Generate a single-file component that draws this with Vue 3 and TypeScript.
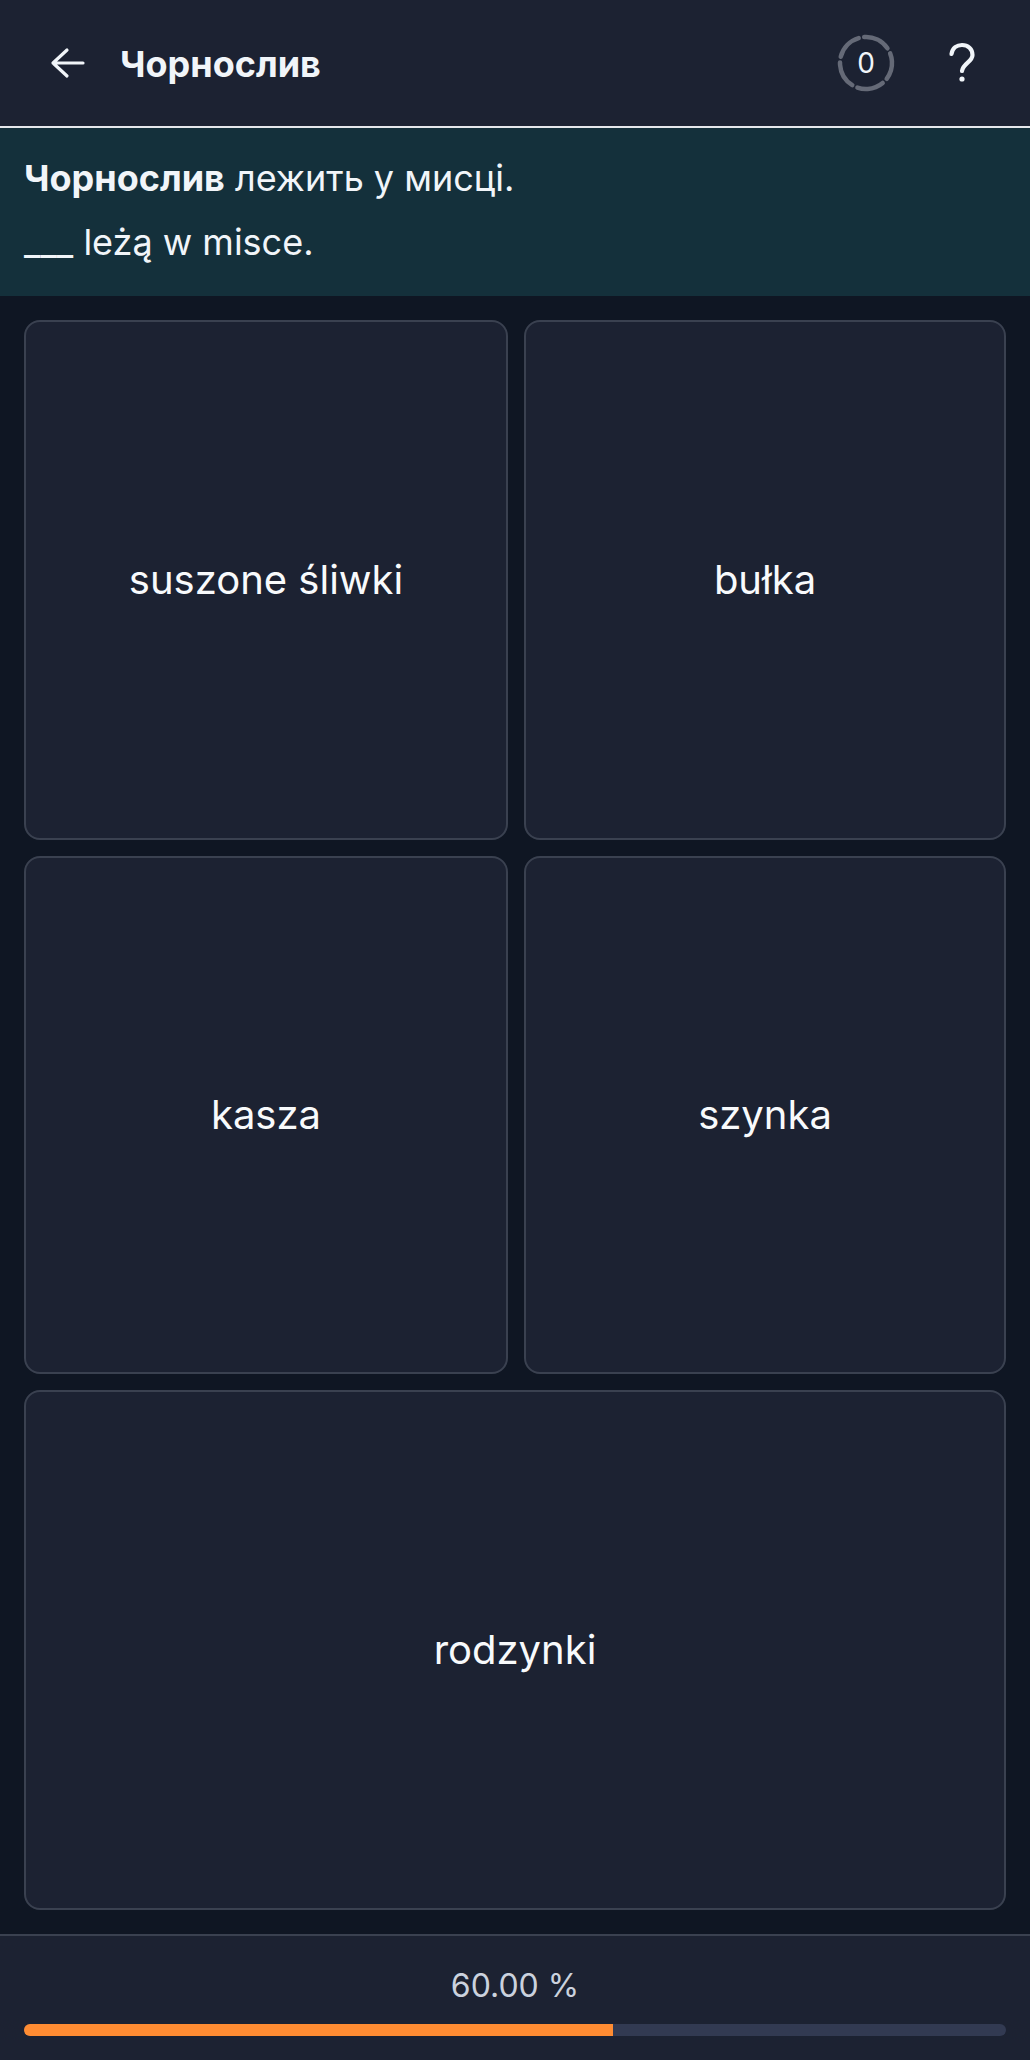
<script setup lang="ts">
interface Option { label: string; wide?: boolean }
const options: Option[] = [
  { label: 'suszone śliwki' },
  { label: 'bułka' },
  { label: 'kasza' },
  { label: 'szynka' },
  { label: 'rodzynki', wide: true },
]
const progress = 60
</script>

<template>
  <div class="page">
    <header class="topbar">
      <svg class="back" width="36" height="32" viewBox="0 0 36 32" fill="none" stroke="#f1f5f9" stroke-width="3.2" stroke-linecap="round" stroke-linejoin="round">
        <path d="M33 16H3M17 3 3 16l14 13" />
      </svg>
      <h1 class="title">Чорнослив</h1>
      <div class="ring">
        <svg width="60" height="60" viewBox="0 0 60 60" fill="none">
          <circle cx="30" cy="30" r="26" stroke="#656a77" stroke-width="4.5" stroke-linecap="round" pathLength="100" stroke-dasharray="16.5 3.5" transform="rotate(-94 30 30)" />
        </svg>
        <span class="count">0</span>
      </div>
      <svg class="help" width="60" height="60" viewBox="0 0 60 60" fill="none" stroke="#f1f5f9" stroke-width="4.2" stroke-linecap="round">
        <path d="M19.5 21C20.5 15 25 12 30 12C36 12 40.5 16 40.5 22C40.5 29 31 30 30 38" />
        <circle cx="30" cy="46" r="2.6" fill="#f1f5f9" stroke="none" />
      </svg>
    </header>
    <section class="prompt">
      <p class="line"><b>Чорнослив</b> лежить у мисці.</p>
      <p class="line">___ leżą w misce.</p>
    </section>
    <main class="grid">
      <button v-for="o in options" :key="o.label" class="card" :class="{ wide: o.wide }"><span class="label">{{ o.label }}</span></button>
    </main>
    <footer class="footer">
      <div class="pct">60.00 %</div>
      <div class="track"><div class="fill" :style="{ width: progress + '%' }"></div></div>
    </footer>
  </div>
</template>

<style>
html, body { margin: 0; background: #0f1623; }
</style>

<style scoped>
.page {
  width: 1030px;
  height: 2060px;
  display: flex;
  flex-direction: column;
  background: #0f1623;
  font-family: Inter, "Noto Sans", sans-serif;
  color: #f1f5f9;
}
.topbar {
  box-sizing: border-box;
  height: 128px;
  flex: none;
  display: flex;
  align-items: center;
  padding: 0 38px 0 50px;
  background: #1c2232;
  border-bottom: 2px solid #e5e7eb;
}
.back { flex: none; }
.title {
  margin: 2px 0 0 34px;
  font-size: 36px;
  font-weight: 700;
  flex: 1;
}
.ring {
  position: relative;
  width: 60px;
  height: 60px;
  display: flex;
  align-items: center;
  justify-content: center;
}
.ring svg { position: absolute; inset: 0; }
.count { font-size: 28px; }
.help { margin-left: 36px; flex: none; }
.prompt {
  box-sizing: border-box;
  height: 168px;
  flex: none;
  padding: 18px 24px 0;
  background: #14303b;
}
.line {
  margin: 0;
  font-size: 36px;
  line-height: 64px;
}
.grid {
  flex: 1;
  display: grid;
  grid-template-columns: 484px 482px;
  grid-template-rows: 520px 518px 520px;
  gap: 16px;
  padding: 24px;
  min-height: 0;
}
.card {
  font: inherit;
  font-size: 40px;
  color: #f8fafc;
  background: #1c2232;
  border: 2px solid #3a4150;
  border-radius: 16px;
  padding: 0;
  display: flex;
  align-items: center;
  justify-content: center;
}
.label { display: block; margin-top: -2px; }
.wide { grid-column: span 2; }
.footer {
  box-sizing: border-box;
  height: 126px;
  flex: none;
  background: #1c2232;
  border-top: 2px solid #3a4150;
  padding: 0 24px;
  display: flex;
  flex-direction: column;
  align-items: stretch;
}
.pct {
  margin-top: 28px;
  text-align: center;
  font-size: 32px;
  line-height: 44px;
  color: #cbd2de;
}
.track {
  margin-top: 16px;
  height: 12px;
  border-radius: 6px;
  background: #323a52;
  overflow: hidden;
}
.fill {
  height: 100%;
  background: #ff8c33;
}
</style>
